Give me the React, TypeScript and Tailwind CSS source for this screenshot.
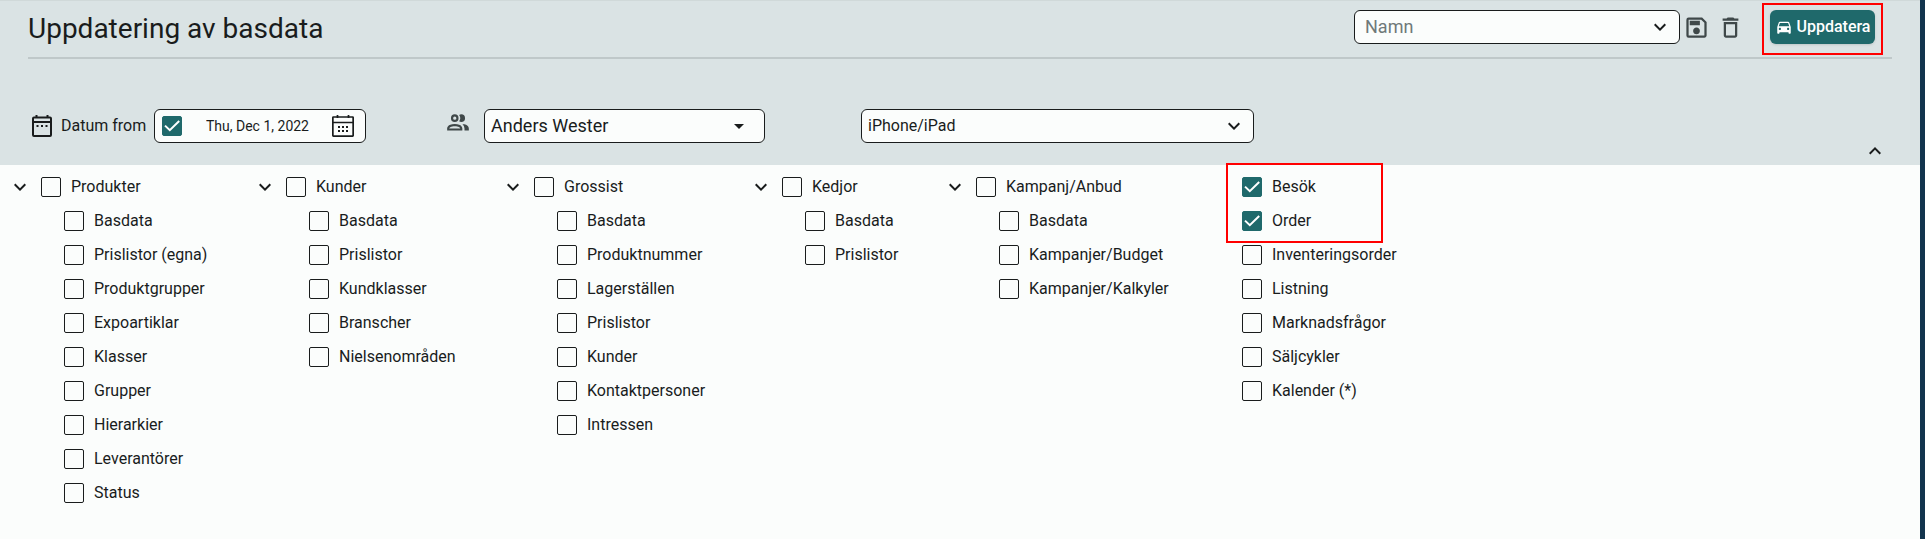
import { useState, type ReactNode } from "react";
import { MdArrowDropDown, MdDeleteOutline, MdDirectionsCar, MdExpandLess, MdExpandMore, MdOutlineSave } from "react-icons/md";

type Group = { name: string; items: string[] };

const groups: Group[] = [
  {
    name: "Produkter",
    items: ["Basdata", "Prislistor (egna)", "Produktgrupper", "Expoartiklar", "Klasser", "Grupper", "Hierarkier", "Leverantörer", "Status"],
  },
  { name: "Kunder", items: ["Basdata", "Prislistor", "Kundklasser", "Branscher", "Nielsenområden"] },
  {
    name: "Grossist",
    items: ["Basdata", "Produktnummer", "Lagerställen", "Prislistor", "Kunder", "Kontaktpersoner", "Intressen"],
  },
  { name: "Kedjor", items: ["Basdata", "Prislistor"] },
  { name: "Kampanj/Anbud", items: ["Basdata", "Kampanjer/Budget", "Kampanjer/Kalkyler"] },
];

const extras = ["Besök", "Order", "Inventeringsorder", "Listning", "Marknadsfrågor", "Säljcykler", "Kalender (*)"];
const preselected = ["Besök", "Order"];

function CheckBox({ label, checked = false, hideLabel = false }: { label: string; checked?: boolean; hideLabel?: boolean }) {
  const [on, setOn] = useState(checked);
  return (
    <label className="flex h-[34px] w-fit items-center gap-[10px] whitespace-nowrap">
      <span className="grid size-5 shrink-0">
        <input
          type="checkbox"
          aria-label={hideLabel ? label : undefined}
          checked={on}
          onChange={() => setOn(!on)}
          className="peer col-start-1 row-start-1 size-5 appearance-none rounded-[2px] border border-[#191c1c] checked:border-[#1f696b] checked:bg-[#1f696b]"
        />
        <svg viewBox="0 0 20 20" className="pointer-events-none col-start-1 row-start-1 hidden size-5 peer-checked:block" fill="none" stroke="#fff" strokeWidth="2">
          <path d="M3 9.6 7.8 14.2 17.2 5" />
        </svg>
      </span>
      {!hideLabel && label}
    </label>
  );
}

function SelectBox({ label, value, className, selectClass, icon }: { label: string; value: string; className: string; selectClass: string; icon: ReactNode }) {
  return (
    <div className={"grid items-center " + className}>
      <select
        aria-label={label}
        className={"col-start-1 row-start-1 h-[34px] w-full appearance-none rounded-md border border-[#191c1c] bg-[#fbfdfc] " + selectClass}
      >
        <option>{value}</option>
      </select>
      <span className="pointer-events-none col-start-1 row-start-1 justify-self-end">{icon}</span>
    </div>
  );
}

function CalendarDots() {
  return (
    <svg viewBox="0 0 20 22" className="mb-[6px] h-[22px] w-5 shrink-0" fill="none" stroke="#191c1c" strokeWidth="2">
      <rect x="1" y="2.500" width="18" height="18.500" rx="1" />
      <path d="M1 7h18M4.500 0v3M15.500 0v3" />
      <path d="M4.500 11h2M9 11h2M13.500 11h2" />
    </svg>
  );
}

function CalendarGrid() {
  return (
    <svg viewBox="0 0 22 22" className="size-[22px]" fill="none" stroke="#191c1c" strokeWidth="1.700">
      <rect x="0.850" y="2" width="20.300" height="19.100" rx="0.500" />
      <path d="M1 7.500h20M5.500 0v3M16.500 0v3" />
      <path d="M6 12h2M10 12h2M14 12h2M6 16h2M10 16h2M14 16h2" strokeWidth="2" />
    </svg>
  );
}

function People() {
  return (
    <svg viewBox="0 0 24 24" className="mb-[7px] ml-[79px] size-[26px] shrink-0" fill="#3f4849">
      <path d="M13.070 10.410A5 5 0 0 0 13.070 4.590A3.390 3.390 0 0 1 15 4A3.500 3.500 0 0 1 15 11A3.390 3.390 0 0 1 13.070 10.410M5.500 7.500A3.500 3.500 0 1 1 9 11A3.500 3.500 0 0 1 5.500 7.500M7.500 7.500A1.500 1.500 0 1 0 9 6A1.500 1.500 0 0 0 7.500 7.500M16 17V19H2V17S2 13 9 13 16 17 16 17M14 17C13.860 16.220 12.670 15 9 15S4.070 16.310 4 17M15.950 13A5.320 5.320 0 0 1 18 17V19H22V17S22 13.370 15.940 13Z" />
    </svg>
  );
}

export default function App() {
  return (
    <div className="min-h-screen border-r-[5px] border-[#12344d] bg-[#fbfdfc] font-[Roboto,sans-serif] text-base text-[#191c1c]">
      <header className="border-t border-[#d0d9d9] bg-[#dae3e4] pb-[22px]">
        <div className="mx-7 flex h-[58px] items-start justify-between border-b-2 border-[#bfc8c9]">
          <h1 className="pt-2 text-[28px] leading-10">Uppdatering av basdata</h1>
          <div className="flex items-center pt-[9px] pr-[17px]">
            <SelectBox
              label="Namn"
              value="Namn"
              className="w-[326px]"
              selectClass="pl-[10px] text-lg text-[#6f7979]"
              icon={<MdExpandMore className="mr-2 size-6" />}
            />
            <button aria-label="Spara" className="ml-[3px] text-[#3f4849]">
              <MdOutlineSave className="size-[27px]" />
            </button>
            <button aria-label="Ta bort" className="ml-[7px] text-[#3f4849]">
              <MdDeleteOutline className="size-[27px]" />
            </button>
            <div className="relative ml-[26px]">
              <button className="flex h-[34px] w-[105px] items-center justify-center gap-1 rounded-md bg-[#1f696b] font-medium text-white shadow">
                <MdDirectionsCar className="size-[18px] shrink-0" />
                Uppdatera
              </button>
              <div className="pointer-events-none absolute -top-[7px] -right-2 -bottom-[11px] -left-2 border-2 border-[#f00]" />
            </div>
          </div>
        </div>

        <div className="flex h-[84px] items-end pr-[33px] pl-8">
          <CalendarDots />
          <label htmlFor="from" className="ml-[9px] h-[29px] w-[93px] whitespace-nowrap">
            Datum from
          </label>
          <div className="flex h-[34px] w-[212px] items-center rounded-md border border-[#191c1c] bg-[#fbfdfc] pr-[11px] pl-[7px]">
            <CheckBox label="Använd datum" checked hideLabel />
            <input id="from" defaultValue="Thu, Dec 1, 2022" className="ml-6 w-[115px] bg-transparent text-sm" />
            <button aria-label="Välj datum" className="ml-auto">
              <CalendarGrid />
            </button>
          </div>
          <People />
          <SelectBox
            label="Användare"
            value="Anders Wester"
            className="ml-[13px] w-[281px]"
            selectClass="pl-[6px] text-lg"
            icon={<MdArrowDropDown className="mr-[14px] size-6" />}
          />
          <SelectBox
            label="Enhet"
            value="iPhone/iPad"
            className="ml-24 w-[393px]"
            selectClass="pl-[6px]"
            icon={<MdExpandMore className="mr-2 size-6" />}
          />
          <button aria-label="Fäll ihop" className="-mb-5 ml-auto">
            <MdExpandLess className="size-6" />
          </button>
        </div>
      </header>

      <main className="grid grid-cols-[245fr_248fr_248fr_194fr_283fr_694fr] items-start pt-[5px] pl-2">
        {groups.map((g) => (
          <section key={g.name}>
            <div className="flex items-center gap-[9px]">
              <button aria-label={"Fäll ihop " + g.name}>
                <MdExpandMore className="size-6" />
              </button>
              <CheckBox label={g.name} />
            </div>
            <div className="pl-14">
              {g.items.map((i) => (
                <CheckBox key={i} label={i} />
              ))}
            </div>
          </section>
        ))}
        <section className="relative pl-4">
          {extras.map((i) => (
            <CheckBox key={i} label={i} checked={preselected.includes(i)} />
          ))}
          <div className="pointer-events-none absolute -top-[7px] left-0 h-20 w-[157px] border-2 border-[#f00]" />
        </section>
      </main>
    </div>
  );
}
